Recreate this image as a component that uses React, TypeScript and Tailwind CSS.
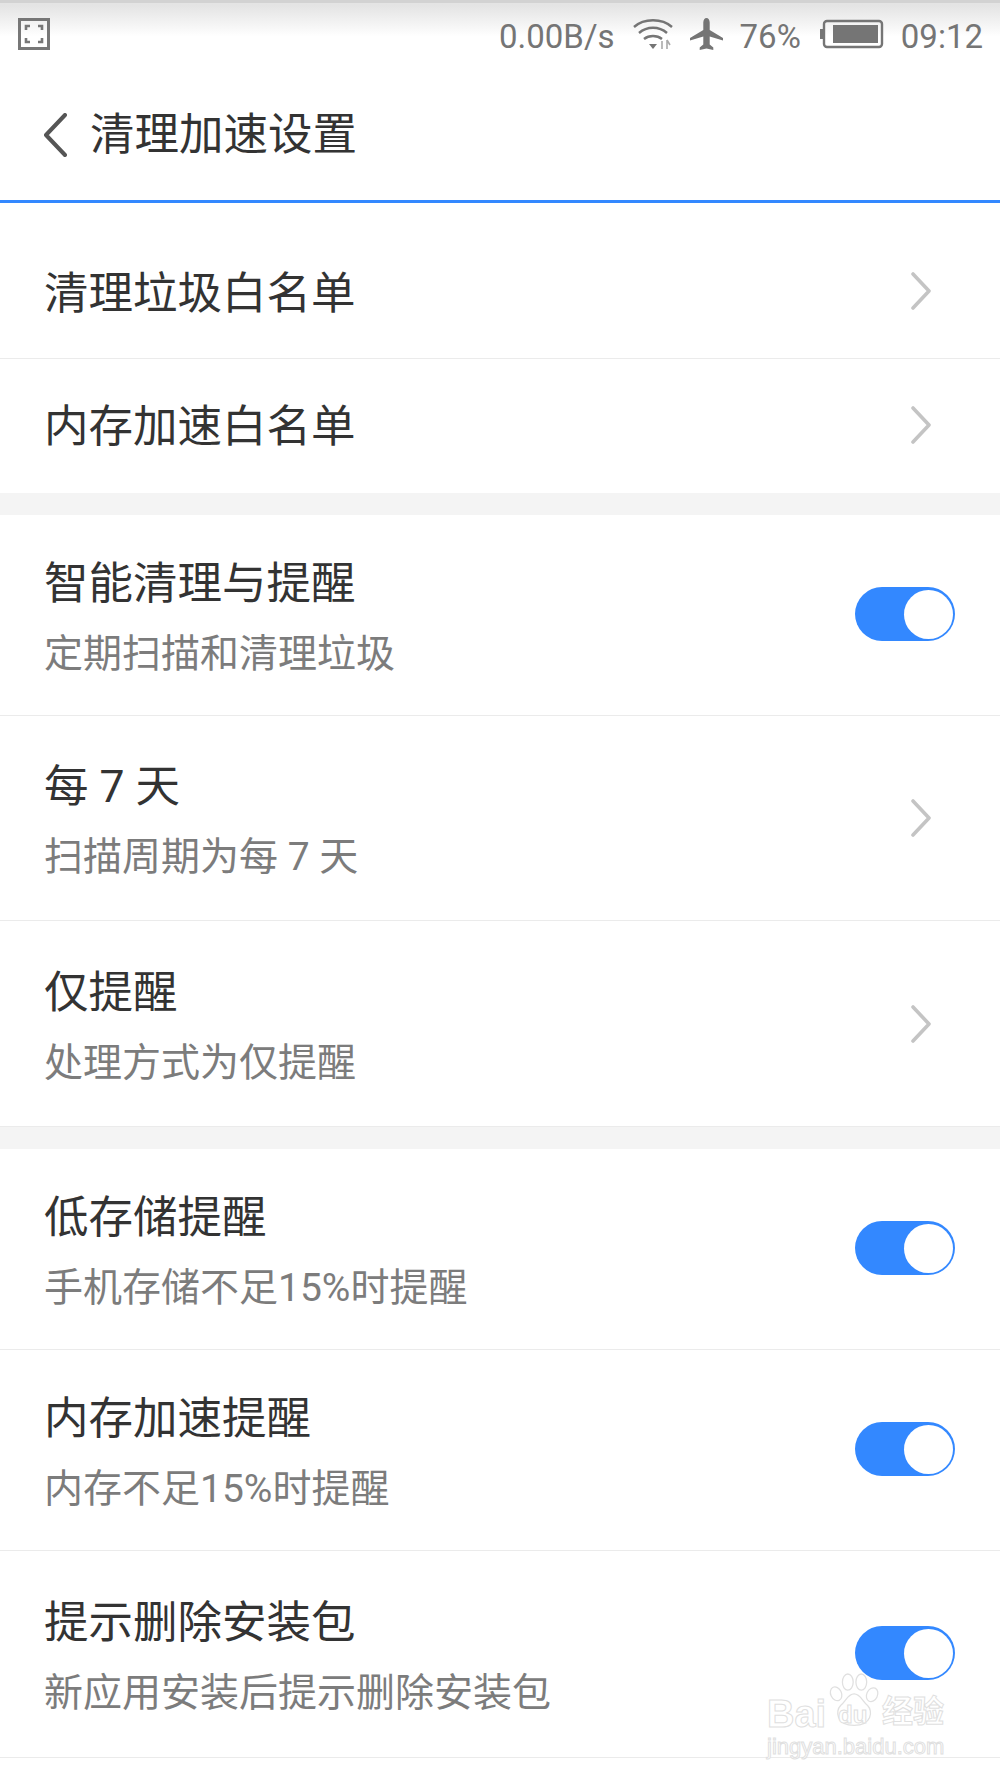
const Toggle = () => (
  <div className="-mt-[2px] h-[54px] w-[100px] shrink-0 rounded-full bg-[#3388ff] flex items-center justify-end pr-[2px]">
    <div className="h-[49px] w-[49px] rounded-full bg-white" />
  </div>
);

const Chevron = ({ raised }: { raised: boolean }) => (
  <svg viewBox="0 0 20 38" className={`${raised ? '-mt-[3px]' : ''} h-[38px] w-[20px] shrink-0 mr-[24px]`} fill="none" stroke="#c4c4c4" strokeWidth="3.6" strokeLinecap="round" strokeLinejoin="round">
    <path d="M2 2l16 17L2 36" />
  </svg>
);

function Row({ title, sub, action, h }: { title: string; sub?: string; action: 'toggle' | 'chevron'; h: string }) {
  return (
    <div className={`${h} flex items-center justify-between border-b border-[#ebebeb] pl-[44px] pr-[45px]`}>
      <div className={sub ? 'flex flex-col pt-[8px]' : 'flex flex-col pt-[2px]'}>
        <div className="text-[44.5px] leading-[60px] text-[#333333]">{title}</div>
        {sub && <div className="mt-[10px] text-[39px] leading-[60px] text-[#7c7c7c]">{sub}</div>}
      </div>
      {action === 'toggle' ? <Toggle /> : <Chevron raised={!sub} />}
    </div>
  );
}

function Watermark() {
  return (
    <div className="absolute left-[765px] top-[1670px] h-[90px] w-[190px] font-['Liberation_Sans','Noto_Sans_CJK_SC',sans-serif] text-white [-webkit-text-stroke:1px_#e0e0e0]">
      <svg viewBox="0 0 60 64" className="absolute left-[63px] top-[2px] h-[58px] w-[54px]" fill="#ffffff" stroke="#e0e0e0" strokeWidth="1.4">
        <ellipse cx="9" cy="24" rx="6" ry="8" transform="rotate(-25 9 24)" />
        <ellipse cx="22" cy="11" rx="6" ry="9" />
        <ellipse cx="37" cy="11" rx="6" ry="9" />
        <ellipse cx="49" cy="25" rx="6" ry="8" transform="rotate(25 49 25)" />
        <path d="M29 24c7 0 9 8 15 13 6 6 5 22-15 22S8 43 14 37c6-5 8-13 15-13z" />
      </svg>
      <div className="absolute left-[2px] top-[24px] text-[38px] font-bold leading-[40px]">Bai</div>
      <div className="absolute left-[73px] top-[31px] text-[24px] font-bold leading-[28px]">du</div>
      <div className="absolute left-[117px] top-[24px] text-[31px] font-bold leading-[36px]">经验</div>
      <div className="absolute left-[2px] top-[64px] text-[22px] leading-[26px]">jingyan.baidu.com</div>
    </div>
  );
}

export default function App() {
  return (
    <div className="relative h-[1778px] w-[1000px] overflow-hidden bg-white font-['Roboto','Noto_Sans_CJK_SC',sans-serif]">
      {/* status bar */}
      <div className="h-[70px] bg-gradient-to-b from-[#e4e4e4] from-[4%] to-white to-[50%] border-t-[3px] border-[#d2d2d2] flex items-center justify-between pl-[18px] pr-[17px] text-[33px] text-[#757575]">
        <svg viewBox="0 0 32 32" className="-mt-[5px] h-[32px] w-[32px]" fill="none" stroke="#777777">
          <rect x="1.500" y="1.500" width="29" height="29" strokeWidth="3" />
          <path d="M8 12V8h4M20 8h4v4M24 20v4h-4M12 24H8v-4" strokeWidth="2.600" />
        </svg>
        <div className="flex items-center">
          <span>0.00B/s</span>
          <svg viewBox="0 0 40 32" className="-mt-[5px] ml-[18px] h-[32px] w-[40px]" fill="none" stroke="#757575" strokeWidth="2.400">
            <path d="M1 9c10-9 28-9 38 0M6 15c8-7 20-7 28 0M11 21c5-4 13-4 18 0" />
            <path d="M16 26h8l-4 5z" fill="#757575" stroke="none" />
            <path d="M29 23v8M34 22v9M34 22l3 5" stroke="#aaaaaa" strokeWidth="1.600" />
          </svg>
          <svg viewBox="0 0 33 32" className="-mt-[5px] ml-[17px] h-[32px] w-[33px]" fill="#757575">
            <path d="M16.500 0c1.800 0 3.200 2 3.200 4.500v7.500L33 20v2.500l-13.300-4v8l3.600 3V32l-6.800-1.500L9.700 32v-2.500l3.600-3v-8L0 22.500V20l13.300-8V4.500C13.300 2 14.700 0 16.500 0z" />
          </svg>
          <span className="ml-[17px]">76%</span>
          <svg viewBox="0 0 64 30" className="-mt-[5px] ml-[19px] h-[30px] w-[64px]" fill="none">
            <rect x="0" y="10" width="3" height="10" fill="#757575" />
            <rect x="4" y="2" width="58" height="26" rx="3" stroke="#757575" strokeWidth="2.400" />
            <rect x="13" y="6" width="45" height="18" fill="#757575" />
          </svg>
          <span className="ml-[17px]">09:12</span>
        </div>
      </div>

      {/* header */}
      <div className="h-[133px] border-b-[3px] border-[#3388ff] flex items-center pl-[43px]">
        <svg viewBox="0 0 24 44" className="h-[44px] w-[24px]" fill="none" stroke="#555555" strokeWidth="4" strokeLinecap="round" strokeLinejoin="round">
          <path d="M22 2L3 22l19 20" />
        </svg>
        <span className="ml-[23px] text-[44.5px] leading-[60px] text-[#333333]">清理加速设置</span>
      </div>

      <Row title="清理垃圾白名单" action="chevron" h="h-[156px] pt-[24px]" />
      <Row title="内存加速白名单" action="chevron" h="h-[134px] border-b-0" />
      <div className="h-[22px] bg-[#f4f4f4]" />
      <Row title="智能清理与提醒" sub="定期扫描和清理垃圾" action="toggle" h="h-[201px]" />
      <Row title="每 7 天" sub="扫描周期为每 7 天" action="chevron" h="h-[205px]" />
      <Row title="仅提醒" sub="处理方式为仅提醒" action="chevron" h="h-[206px]" />
      <div className="h-[22px] bg-[#f4f4f4]" />
      <Row title="低存储提醒" sub="手机存储不足15%时提醒" action="toggle" h="h-[201px]" />
      <Row title="内存加速提醒" sub="内存不足15%时提醒" action="toggle" h="h-[201px]" />
      <Row title="提示删除安装包" sub="新应用安装后提示删除安装包" action="toggle" h="h-[207px]" />

      <Watermark />
    </div>
  );
}
